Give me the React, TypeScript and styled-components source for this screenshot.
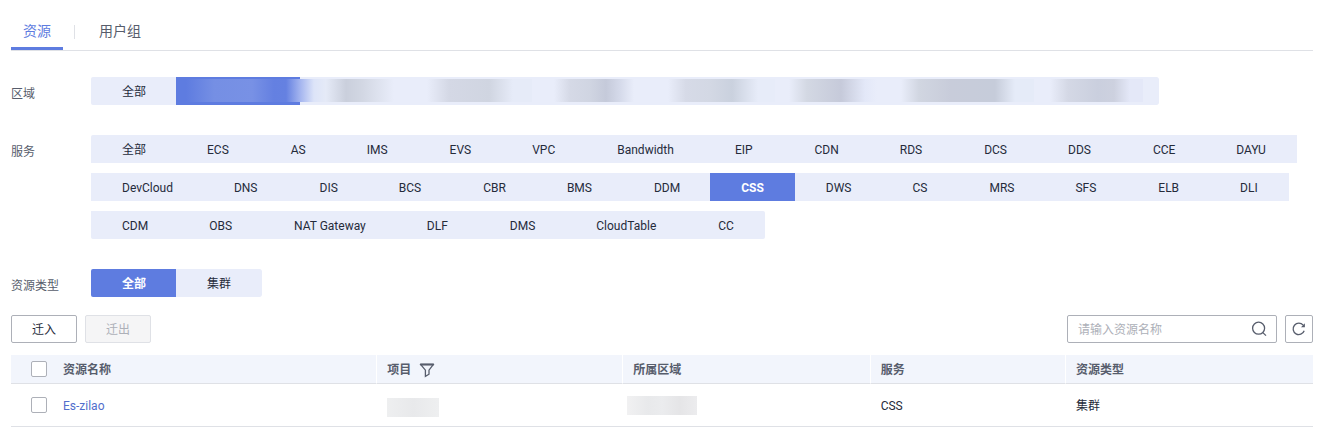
import React, { useState } from "react";
import styled, { createGlobalStyle, css } from "styled-components";

const GlobalStyle = createGlobalStyle`
  *, *::before, *::after { box-sizing: border-box; }
  body {
    margin: 0;
    background: #fff;
    color: #252b3a;
    font: 12px/18px Roboto, "Noto Sans CJK SC", sans-serif;
  }
  button, input { font: inherit; color: inherit; margin: 0; }
`;

const Page = styled.main`
  padding: 12px 4px 0 11px;
`;

const Tabs = styled.nav`
  display: flex;
  align-items: stretch;
  height: 39px;
  border-bottom: 1px solid #dfe1e6;
`;

const Tab = styled.button<{ $active?: boolean }>`
  padding: 0 12px;
  border: 0;
  border-top: 3px solid transparent;
  border-bottom: 3px solid ${(p) => (p.$active ? "#5e7ce0" : "transparent")};
  background: none;
  font-size: 14px;
  line-height: 20px;
  color: ${(p) => (p.$active ? "#5e7ce0" : "#575d6c")};
  cursor: pointer;
`;

const TabDivider = styled.span`
  width: 1px;
  height: 14px;
  margin: 13px 12px 0 11px;
  background: #dfe1e6;
`;

const Filters = styled.div`
  display: flex;
  flex-direction: column;
  gap: 30px;
  padding: 26px 0 18px;
`;

const Filter = styled.section`
  display: flex;
`;

const FilterLabel = styled.h2`
  flex: 0 0 80px;
  margin: 0;
  padding-top: 8px;
  font-size: 12px;
  font-weight: 400;
  color: #575d6c;
`;

const Chips = styled.div`
  display: flex;
  flex-wrap: wrap;
  row-gap: 10px;
  border-radius: 2px;
  overflow: hidden;
`;

const Chip = styled.button<{ $active?: boolean }>`
  height: 28px;
  padding: 2px 30px 0 31px;
  border: 0;
  background: #e9edfa;
  cursor: pointer;
  &:last-child { padding-right: 31px; border-radius: 0 2px 2px 0; }
  ${(p) =>
    p.$active &&
    css`
      background: #5e7ce0;
      color: #fff;
      font-weight: 700;
    `}
`;

const ServiceChip = styled(Chip)`
  &:nth-child(even) { padding-right: 31px; }
`;

const MaskedChip = styled(Chip)<{ $width: number; $fill: string }>`
  width: ${(p) => p.$width}px;
  padding: 0;
  &:last-child { padding: 0 16px 0 0; }
  &::before {
    content: "";
    display: block;
    height: 23px;
    margin-bottom: 1px;
    background: linear-gradient(90deg, ${(p) => p.$fill});
  }
`;

const Toolbar = styled.div`
  display: flex;
  gap: 8px;
  margin-bottom: 12px;
`;

const Action = styled.button`
  width: 66px;
  height: 28px;
  padding: 2px 0 0;
  border: 1px solid #adb0b8;
  border-radius: 2px;
  background: #fff;
  cursor: pointer;
  &:disabled {
    border-color: #dfe1e6;
    background: #f5f5f6;
    color: #adb0b8;
  }
`;

const SearchBox = styled.form`
  display: flex;
  align-items: center;
  width: 210px;
  height: 28px;
  margin-left: auto;
  padding: 0 9px 0 10px;
  border: 1px solid #adb0b8;
  border-radius: 2px;
`;

const SearchInput = styled.input`
  flex: 1;
  min-width: 0;
  padding: 2px 0 0;
  border: 0;
  outline: 0;
  background: none;
  &::placeholder { color: #adb0b8; opacity: 1; }
`;

const IconButton = styled.button`
  display: flex;
  padding: 0;
  border: 0;
  background: none;
  color: #575d6c;
  cursor: pointer;
`;

const RefreshButton = styled(IconButton)`
  align-items: center;
  justify-content: center;
  width: 28px;
  height: 28px;
  border: 1px solid #adb0b8;
  border-radius: 2px;
`;

const Table = styled.table`
  width: 100%;
  table-layout: fixed;
  border-collapse: separate;
  border-spacing: 0;
`;

const Col = styled.col<{ $width?: string }>`
  width: ${(p) => p.$width ?? "auto"};
`;

const Th = styled.th<{ $plain?: boolean }>`
  height: 29px;
  padding: 2px 10px 0;
  border-bottom: 1px solid #dfe1e6;
  border-right: ${(p) => (p.$plain ? "0" : "1px solid #fff")};
  background: #f2f5fc;
  color: #575d6c;
  font-weight: 700;
  text-align: left;
  &:last-child { border-right: 0; }
`;

const Td = styled.td`
  height: 43px;
  padding: 2px 10px 0;
  border-bottom: 1px solid #dfe1e6;
`;

const CheckTh = styled(Th)`
  padding: 0 0 0 20px;
`;

const CheckTd = styled(Td)`
  padding: 0 0 0 20px;
`;

const HeadContent = styled.span`
  display: flex;
  align-items: center;
  gap: 8px;
`;

const Checkbox = styled.input`
  display: block;
  appearance: none;
  width: 16px;
  height: 16px;
  border: 1px solid #adb0b8;
  border-radius: 2px;
  background: #fff;
  &:checked { background: #5e7ce0; border-color: #5e7ce0; }
`;

const ResourceLink = styled.a`
  color: #526ecc;
  text-decoration: none;
`;

const Mask = styled.span<{ $width: number; $fill: string }>`
  display: block;
  width: ${(p) => p.$width}px;
  height: 19px;
  background: linear-gradient(90deg, ${(p) => p.$fill});
`;

const ProjectTd = styled(Td)`
  padding-top: 4px;
`;

const RegionTd = styled(Td)`
  padding-top: 0;
  padding-left: 4px;
`;

const regions = [
  { width: 124, fill: "#5e7ce0 10px, #758fe4 38px, #7891e5 76px, #6480e1 98px, #6581e1 110px, #a3b4ef 124px" },
  { width: 111, fill: "#a3b4ef, #dde4f8 14px, #e5eaf7 26px, #cacfdc 46px, #d2d7e3 62px, #e9edfa 94px" },
  { width: 121, fill: "#e9edfa 16px, #d4d8e5 38px, #d0d5e1 78px, #e6ebf8 102px" },
  { width: 118, fill: "#e9edfa 22px, #d5d9e6 38px, #d0d5e2 58px, #c5cada 74px, #d5daea 88px, #e9edfa 102px" },
  { width: 125, fill: "#e9edfa 18px, #d6dae7 36px, #d3d8e4 60px, #cad1de 82px, #e7ecf9 108px" },
  { width: 110, fill: "#e9edfa 14px, #d3d8e3 32px, #c6cada 66px, #e3e8f8 90px, #e9edfa 102px" },
  { width: 149, fill: "#e9edfa 16px, #d1d6e1 34px, #c8ccda 66px, #c6ccda 110px, #e5ebf8 130px" },
  { width: 125, fill: "#e9edfa 16px, #d4d8e5 34px, #cacfde 64px, #cdd1df 80px, #e4e8f8 96px" },
];

const services = [
  "全部", "ECS", "AS", "IMS", "EVS", "VPC", "Bandwidth", "EIP", "CDN", "RDS", "DCS", "DDS", "CCE", "DAYU",
  "DevCloud", "DNS", "DIS", "BCS", "CBR", "BMS", "DDM", "CSS", "DWS", "CS", "MRS", "SFS", "ELB", "DLI",
  "CDM", "OBS", "NAT Gateway", "DLF", "DMS", "CloudTable", "CC",
];

const types = ["全部", "集群"];

function SearchIcon() {
  return (
    <svg width="16" height="16" viewBox="0 0 16 16" fill="none" stroke="currentColor" strokeWidth="1.3">
      <circle cx="7.6" cy="7.2" r="6" />
      <path d="M11.8 11.6 15 14.6" />
    </svg>
  );
}

function RefreshIcon() {
  return (
    <svg width="14" height="14" viewBox="0 0 14 14" fill="none" stroke="currentColor" strokeWidth="1.3">
      <path d="M12.2 8.8A5.7 5.7 0 1 1 11.2 3.2" />
      <path d="M12.9 1.2v4H9Z" fill="currentColor" stroke="none" />
    </svg>
  );
}

function FilterIcon() {
  return (
    <svg width="16" height="16" viewBox="0 0 16 16" fill="none" stroke="currentColor" strokeWidth="1.3">
      <path d="M1.8 2.6h12.4L10 8.2v4L6.4 14.4V8.2Z" />
      <path d="M1.2 2.4h13.6" strokeWidth="2" />
    </svg>
  );
}

export default function App() {
  const [service, setService] = useState("CSS");
  const [type, setType] = useState("全部");
  const [region, setRegion] = useState(0);

  return (
    <>
      <GlobalStyle />
      <Page>
        <Tabs>
          <Tab $active>资源</Tab>
          <TabDivider />
          <Tab>用户组</Tab>
        </Tabs>

        <Filters>
          <Filter>
            <FilterLabel id="region">区域</FilterLabel>
            <Chips role="group" aria-labelledby="region">
              <Chip>全部</Chip>
              {regions.map((r, i) => (
                <MaskedChip
                  key={i}
                  $width={r.width}
                  $fill={r.fill}
                  $active={region === i}
                  aria-pressed={region === i}
                  onClick={() => setRegion(i)}
                />
              ))}
            </Chips>
          </Filter>
          <Filter>
            <FilterLabel id="service">服务</FilterLabel>
            <Chips role="group" aria-labelledby="service">
              {services.map((s) => (
                <ServiceChip
                  key={s}
                  $active={s === service}
                  aria-pressed={s === service}
                  onClick={() => setService(s)}
                >
                  {s}
                </ServiceChip>
              ))}
            </Chips>
          </Filter>
          <Filter>
            <FilterLabel id="type">资源类型</FilterLabel>
            <Chips role="group" aria-labelledby="type">
              {types.map((t) => (
                <Chip key={t} $active={t === type} aria-pressed={t === type} onClick={() => setType(t)}>
                  {t}
                </Chip>
              ))}
            </Chips>
          </Filter>
        </Filters>

        <Toolbar>
          <Action>迁入</Action>
          <Action disabled>迁出</Action>
          <SearchBox onSubmit={(e) => e.preventDefault()}>
            <SearchInput type="text" placeholder="请输入资源名称" aria-label="资源名称" />
            <IconButton type="submit" aria-label="搜索">
              <SearchIcon />
            </IconButton>
          </SearchBox>
          <RefreshButton aria-label="刷新">
            <RefreshIcon />
          </RefreshButton>
        </Toolbar>

        <Table>
          <colgroup>
            <Col $width="42px" />
            <Col $width="24.9%" />
            <Col $width="18.9%" />
            <Col $width="19%" />
            <Col $width="15%" />
            <Col />
          </colgroup>
          <thead>
            <tr>
              <CheckTh $plain>
                <Checkbox type="checkbox" aria-label="全选" />
              </CheckTh>
              <Th>资源名称</Th>
              <Th>
                <HeadContent>
                  项目
                  <IconButton aria-label="筛选">
                    <FilterIcon />
                  </IconButton>
                </HeadContent>
              </Th>
              <Th>所属区域</Th>
              <Th>服务</Th>
              <Th>资源类型</Th>
            </tr>
          </thead>
          <tbody>
            <tr>
              <CheckTd>
                <Checkbox type="checkbox" aria-label="Es-zilao" />
              </CheckTd>
              <Td>
                <ResourceLink href="#es-zilao">Es-zilao</ResourceLink>
              </Td>
              <ProjectTd>
                <Mask $width={52} $fill="#eeeff0, #e8e9eb 50%, #eeeff0" />
              </ProjectTd>
              <RegionTd>
                <Mask $width={70} $fill="#f1f1f2, #e8e9eb 30%, #ebecee 50%, #e5e5e7 75%, #ececee" />
              </RegionTd>
              <Td>CSS</Td>
              <Td>集群</Td>
            </tr>
          </tbody>
        </Table>
      </Page>
    </>
  );
}
